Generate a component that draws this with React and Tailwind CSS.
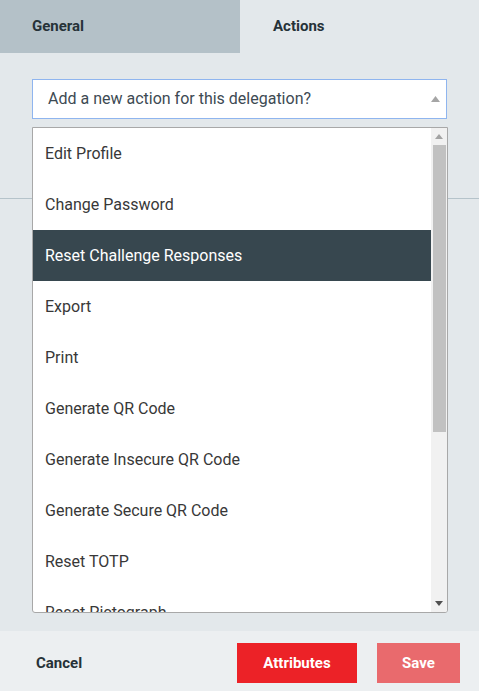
import React from "react";

const actions = [
  "Edit Profile",
  "Change Password",
  "Reset Challenge Responses",
  "Export",
  "Print",
  "Generate QR Code",
  "Generate Insecure QR Code",
  "Generate Secure QR Code",
  "Reset TOTP",
  "Reset Pictograph",
];

const App = () => {
  const selected = "Reset Challenge Responses";

  return (
    <div
      className="w-[479px] h-[691px] flex flex-col bg-[#e3e8eb] overflow-hidden"
      style={{ fontFamily: "Roboto, 'Liberation Sans', sans-serif" }}
    >
      {/* tabs */}
      <div className="flex h-[53px] shrink-0">
        <div className="w-[240px] bg-[#b4c1c8] flex items-center pl-8 text-[15px] font-bold text-[#263238]">
          General
        </div>
        <div className="flex-1 flex items-center pl-[33px] text-[15px] font-bold text-[#263238]">
          Actions
        </div>
      </div>

      {/* body */}
      <div className="relative flex-1">
        <div className="h-[146px] border-b border-[#b5c3ca] pt-[26px] px-8">
          <div className="h-[40px] bg-white border border-[#8fb5ef] flex items-center justify-between pl-[15px] pr-[6px]">
            <span className="text-[16px] text-[#3d4a53]">
              Add a new action for this delegation?
            </span>
            <svg width="9" height="6" viewBox="0 0 9 6">
              <path d="M4.5 0 L9 6 L0 6 Z" fill="#a5a5a5" />
            </svg>
          </div>
        </div>

        {/* dropdown list */}
        <div className="absolute left-8 top-[74px] w-[416px] h-[486px] bg-white border border-[#a8a8a8] rounded-b-[3px] flex overflow-hidden">
          <div className="flex-1 overflow-hidden">
            {actions.map((a) => (
              <div
                key={a}
                className={
                  a === selected
                    ? "h-[51px] shrink-0 flex items-center pl-3 text-[16px] bg-[#37474f] text-white"
                    : "h-[51px] shrink-0 flex items-center pl-3 text-[16px] text-[#383838]"
                }
              >
                {a}
              </div>
            ))}
          </div>
          <div className="w-[16px] bg-[#f1f1f1] flex flex-col items-center">
            <div className="h-[17px] flex items-center justify-center">
              <svg width="8" height="5" viewBox="0 0 8 5">
                <path d="M4 0 L8 5 L0 5 Z" fill="#a3a3a3" />
              </svg>
            </div>
            <div className="w-[13px] h-[287px] bg-[#c1c1c1]" />
            <div className="flex-1" />
            <div className="h-[17px] flex items-center justify-center">
              <svg width="8" height="5" viewBox="0 0 8 5">
                <path d="M0 0 L8 0 L4 5 Z" fill="#505050" />
              </svg>
            </div>
          </div>
        </div>
      </div>

      {/* footer */}
      <div className="h-[60px] shrink-0 bg-[#eceff1] flex items-center pt-1 pl-9 pr-[19px]">
        <span className="text-[15px] font-bold text-[#263238]">Cancel</span>
        <div className="flex-1" />
        <button className="w-[120px] h-[40px] bg-[#ec2227] text-white text-[15px] font-bold">
          Attributes
        </button>
        <button className="ml-5 w-[83px] h-[40px] bg-[#e96a6d] text-white text-[15px] font-bold">
          Save
        </button>
      </div>
    </div>
  );
};

export default App;
